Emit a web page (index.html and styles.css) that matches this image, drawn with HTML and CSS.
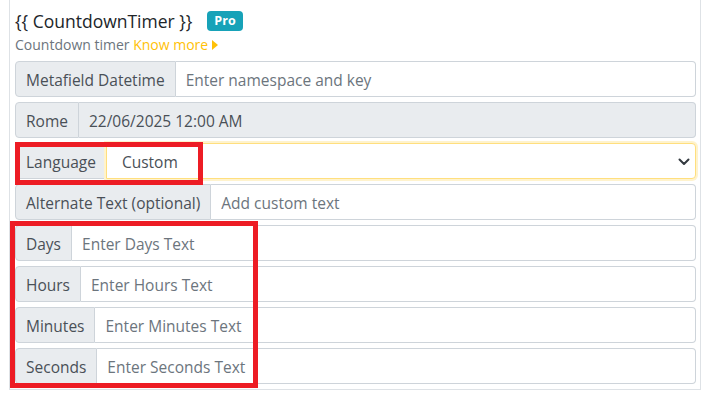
FILE: index.html
```html
<!DOCTYPE html>
<html lang="en">
<head>
  <meta charset="UTF-8">
  <meta name="viewport" content="width=device-width, initial-scale=1.0">
  <title>Countdown Timer</title>
  <link rel="stylesheet" href="styles.css">
</head>
<body>
  <div class="panel">
    <div class="title-row">
      <h5 class="title">{{ CountdownTimer }}</h5>
      <span class="badge-pro">Pro</span>
    </div>
    <p class="subtitle">Countdown timer <a href="#" class="know-more">Know more <svg width="6" height="10" viewBox="0 0 6 10"><path d="M0 0 L6 5 L0 10 Z" fill="#ffc107"/></svg></a></p>

    <div class="input-group">
      <span class="addon">Metafield Datetime</span>
      <input class="field" type="text" placeholder="Enter namespace and key">
    </div>

    <div class="input-group">
      <span class="addon">Rome</span>
      <input class="field" type="text" value="22/06/2025 12:00 AM" disabled>
    </div>

    <div class="input-group">
      <span class="addon">Language</span>
      <div class="select-wrap">
        <select class="select">
          <option>Custom</option>
        </select>
        <svg class="chevron" width="12" height="8" viewBox="0 0 12 8"><path d="M1.5 1.5 L6 6 L10.5 1.5" fill="none" stroke="#343a40" stroke-width="2" stroke-linecap="round" stroke-linejoin="round"/></svg>
      </div>
    </div>

    <div class="input-group">
      <span class="addon">Alternate Text (optional)</span>
      <input class="field" type="text" placeholder="Add custom text">
    </div>

    <div class="input-group">
      <span class="addon">Days</span>
      <input class="field" type="text" placeholder="Enter Days Text">
    </div>

    <div class="input-group">
      <span class="addon">Hours</span>
      <input class="field" type="text" placeholder="Enter Hours Text">
    </div>

    <div class="input-group">
      <span class="addon">Minutes</span>
      <input class="field" type="text" placeholder="Enter Minutes Text">
    </div>

    <div class="input-group">
      <span class="addon">Seconds</span>
      <input class="field" type="text" placeholder="Enter Seconds Text">
    </div>
  </div>

  <div class="mark mark-language"></div>
  <div class="mark mark-units"></div>
</body>
</html>
```

FILE: styles.css
```css
body {
  margin: 0;
  background: #fff;
  font-family: 'Open Sans', 'Noto Sans', sans-serif;
  color: #495057;
}
.panel {
  margin-left: 9px;
  width: 681px;
  border: 1px solid #dee2e6;
  border-top: none;
  padding: 9px 4px 0 5px;
}
.title-row {
  display: flex;
  align-items: center;
  gap: 15px;
  height: 24px;
}
.title {
  margin: 0;
  font-size: 17.5px;
  font-weight: 400;
  color: #212529;
}
.badge-pro {
  background: #17a2b8;
  color: #fff;
  font-size: 12.5px;
  font-weight: 700;
  padding: 2px 7px;
  border-radius: 4px;
  line-height: 16px;
}
.subtitle {
  margin: 3px 0 7px;
  font-size: 14px;
  line-height: 18px;
  color: #6c757d;
}
.know-more {
  color: #ffc107;
  text-decoration: none;
}
.input-group {
  display: flex;
  height: 36px;
  margin-bottom: 5px;
}
.addon {
  display: flex;
  align-items: center;
  padding: 1px 10px 0;
  background: #e9ecef;
  border: 1px solid #ced4da;
  border-radius: 4px 0 0 4px;
  font-size: 15.5px;
  white-space: nowrap;
}
.field {
  flex: 1;
  min-width: 0;
  border: 1px solid #ced4da;
  border-left: none;
  border-radius: 0 4px 4px 0;
  padding: 1px 10px 0;
  font-family: inherit;
  font-size: 15.5px;
  color: #495057;
  background: #fff;
  outline: none;
}
.field::placeholder {
  color: #6c757d;
  opacity: 1;
}
.field:disabled {
  background: #e9ecef;
  color: #495057;
}
.select-wrap {
  flex: 1;
  position: relative;
  display: flex;
  margin-left: -1px;
}
.select {
  flex: 1;
  appearance: none;
  border: 1px solid #ffdf7e;
  border-radius: 0 4px 4px 0;
  box-shadow: 0 0 0 2px #fff3cd;
  padding: 1px 15px 0;
  font-family: inherit;
  font-size: 15.5px;
  color: #495057;
  background: #fff;
  outline: none;
}
.chevron {
  position: absolute;
  right: 6px;
  top: 15px;
}
.mark {
  position: absolute;
  border: 5px solid #ed1c24;
  box-sizing: border-box;
}
.mark-language {
  left: 15px;
  top: 142px;
  width: 188px;
  height: 43px;
}
.mark-units {
  left: 10px;
  top: 221px;
  width: 248px;
  height: 167px;
}
```
